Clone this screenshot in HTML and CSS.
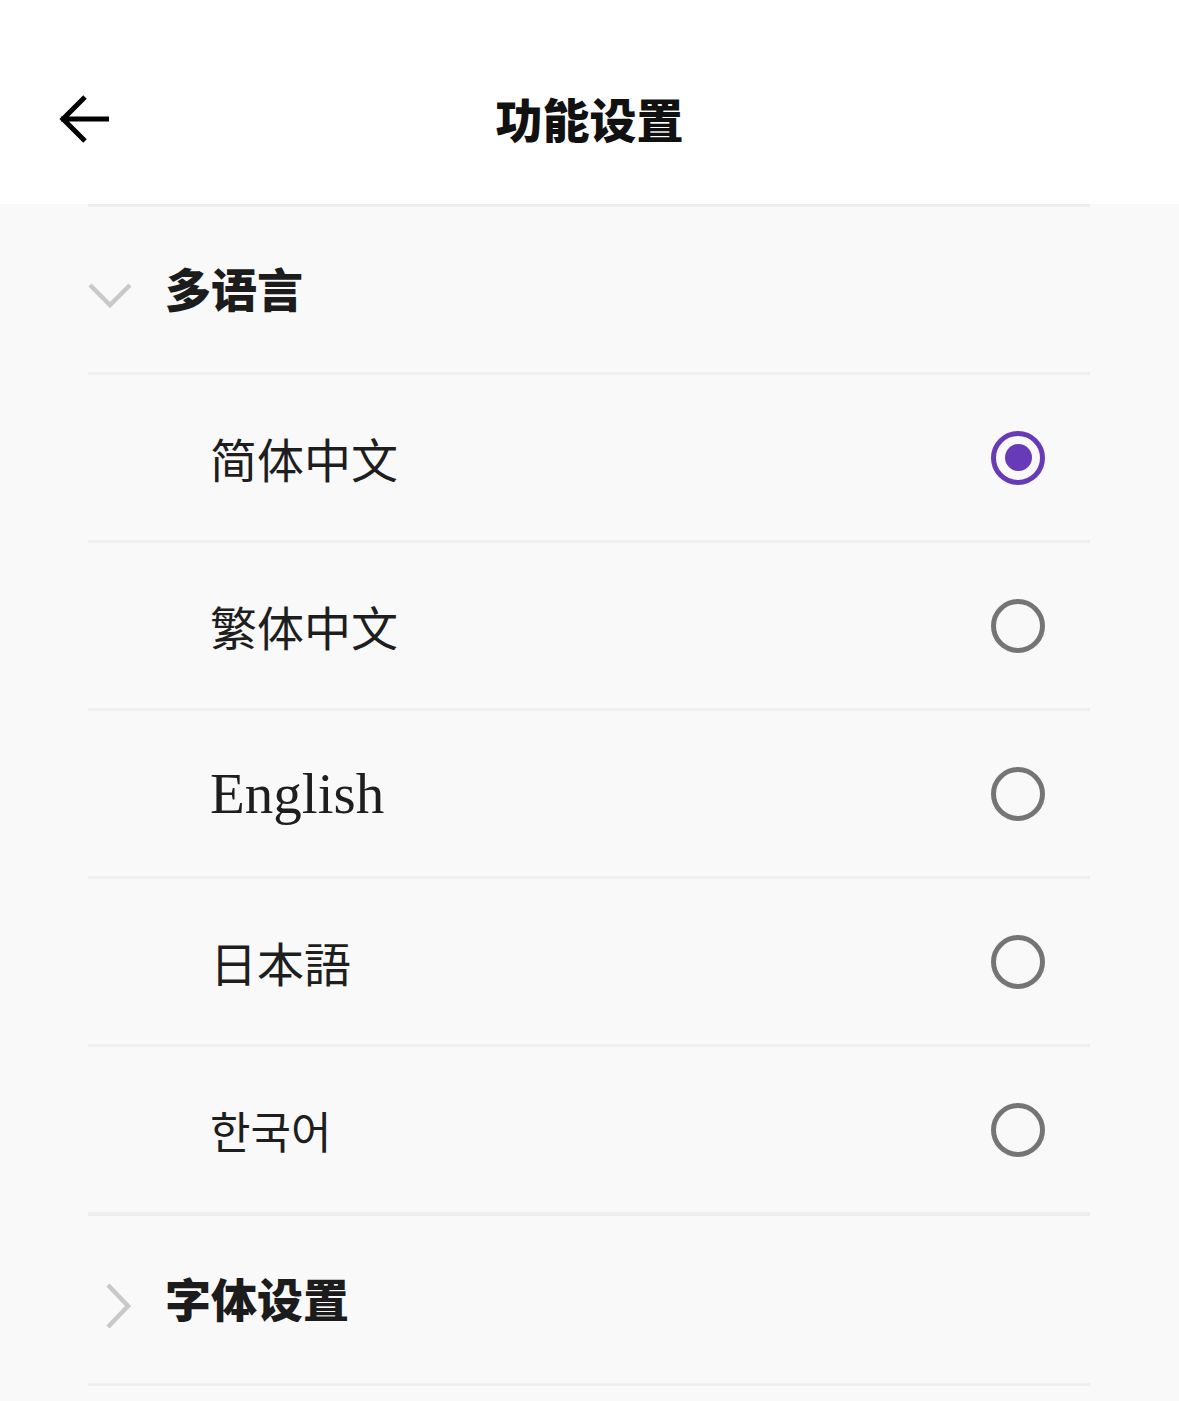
FILE: index.html
```html
<!DOCTYPE html>
<html>
  <head>
    <title>功能设置</title>
    <meta name="viewport" content="width=device-width, initial-scale=1.0">
    <link rel="stylesheet" href="styles.css">
  </head>
  <body>
    <div class="top-bar">
      <svg class="back-icon" width="56" height="52" viewBox="0 0 56 52">
        <path d="M56 24H8 M32 2 L10 24 L32 46" fill="none" stroke="#000" stroke-width="5"/>
      </svg>
      <h1 class="title">功能设置</h1>
    </div>
    <div class="settings">
      <div class="group-row">
        <span class="chevron">
          <svg width="44" height="26" viewBox="0 0 44 26">
            <path d="M2 2 L22 22 L42 2" fill="none" stroke="#c9c9c9" stroke-width="4.5"/>
          </svg>
        </span>
        <span class="group-title">多语言</span>
      </div>
      <div class="option-row">
        <span class="option-label">简体中文</span>
        <span class="radio checked"></span>
      </div>
      <div class="option-row">
        <span class="option-label">繁体中文</span>
        <span class="radio"></span>
      </div>
      <div class="option-row">
        <span class="option-label" lang="en">English</span>
        <span class="radio"></span>
      </div>
      <div class="option-row">
        <span class="option-label" lang="ja">日本語</span>
        <span class="radio"></span>
      </div>
      <div class="option-row">
        <span class="option-label" lang="ko">한국어</span>
        <span class="radio"></span>
      </div>
      <div class="group-row group-break">
        <span class="chevron">
          <svg width="26" height="46" viewBox="0 0 26 46">
            <path d="M2 2 L22 23 L2 44" fill="none" stroke="#c9c9c9" stroke-width="4.5"/>
          </svg>
        </span>
        <span class="group-title">字体设置</span>
      </div>
      <div class="end-line"></div>
    </div>
  </body>
</html>
```

FILE: styles.css
```css
body {
  margin: 0;
  background-color: #f9f9f9;
  font-family: "Liberation Serif", "Noto Sans CJK SC", serif;
  color: #1a1a1a;
}

.top-bar {
  height: 204px;
  background-color: #fff;
  display: flex;
  align-items: center;
  justify-content: center;
  position: relative;
  padding-top: 30px;
  box-sizing: border-box;
}

.back-icon {
  position: absolute;
  left: 53px;
  top: 95px;
}

.title {
  margin: 0;
  font-size: 47px;
  font-weight: 900;
  color: #111;
}

.settings {
  margin: 0 89px 0 88px;
}

.group-row {
  height: 168px;
  border-top: 3px solid #eeeeee;
  box-sizing: border-box;
  display: flex;
  align-items: center;
}

.group-break {
  height: 171px;
  border-top-width: 4px;
}

.chevron {
  width: 44px;
  margin-right: 33px;
  display: flex;
  justify-content: flex-end;
  padding-top: 12px;
}

.group-title {
  font-size: 46px;
  font-weight: 900;
  color: #1c1c1c;
  margin-bottom: 6px;
}

.option-row {
  height: 168px;
  border-top: 3px solid #eeeeee;
  box-sizing: border-box;
  display: flex;
  align-items: center;
  justify-content: space-between;
  padding: 0 45px 0 122px;
}

.option-label {
  font-size: 47px;
  color: #1e1e1e;
}

.option-label:lang(en) {
  font-size: 57px;
}

.option-label:lang(ko) {
  font-size: 44px;
}

.radio {
  width: 54px;
  height: 54px;
  border: 5px solid #757575;
  border-radius: 50%;
  box-sizing: border-box;
  display: flex;
  align-items: center;
  justify-content: center;
}

.radio.checked {
  border-color: #673ab7;
}

.radio.checked::after {
  content: "";
  width: 27px;
  height: 27px;
  border-radius: 50%;
  background-color: #673ab7;
}

.end-line {
  border-top: 3px solid #eeeeee;
}
```
